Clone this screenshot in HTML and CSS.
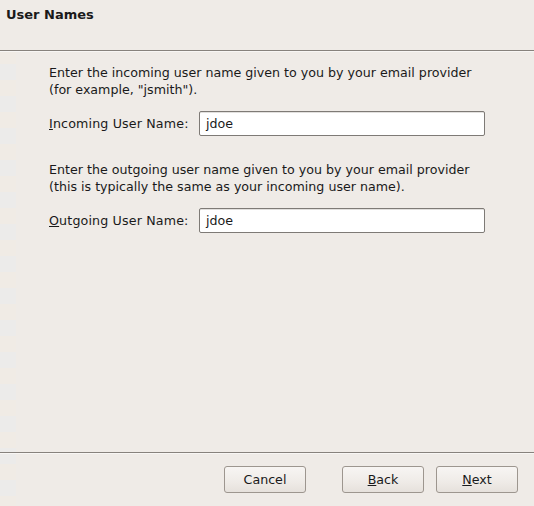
FILE: index.html
```html
<!DOCTYPE html>
<html>
<head>
<meta charset="utf-8">
<link rel="stylesheet" href="styles.css">
</head>
<body>
<div class="window">
  <div class="header">
    <h1 class="title">User Names</h1>
  </div>
  <div class="sep"></div>
  <div class="content">
    <p class="desc">Enter the incoming user name given to you by your email provider<br>(for example, "jsmith").</p>
    <div class="row">
      <label class="label"><u>I</u>ncoming User Name:</label>
      <div class="entry">jdoe</div>
    </div>
    <p class="desc second">Enter the outgoing user name given to you by your email provider<br>(this is typically the same as your incoming user name).</p>
    <div class="row">
      <label class="label"><u>O</u>utgoing User Name:</label>
      <div class="entry">jdoe</div>
    </div>
  </div>
  <div class="sep"></div>
  <div class="buttons">
    <button class="btn">Cancel</button>
    <button class="btn back"><u>B</u>ack</button>
    <button class="btn"><u>N</u>ext</button>
  </div>
</div>
</body>
</html>
```
FILE: styles.css
```css
html, body {
  margin: 0;
  padding: 0;
}
body {
  width: 534px;
  height: 506px;
  background: #efebe7;
  font-family: "DejaVu Sans", sans-serif;
  font-size: 12.65px;
  color: #1a1a1a;
  overflow: hidden;
}
.window {
  display: flex;
  flex-direction: column;
  height: 506px;
  background-image: repeating-linear-gradient(to bottom, #ecebea 0px, #ecebea 16px, #f0ebe5 16px, #f0ebe5 32px);
  background-size: 16px 100%;
  background-repeat: no-repeat;
}
.header {
  height: 50px;
  padding-left: 6px;
  box-sizing: border-box;
  background: #efebe7;
}
.title {
  margin: 0;
  padding-top: 6px;
  font-size: 13px;
  font-weight: bold;
  line-height: 17px;
  color: #1a1a1a;
}
.sep {
  height: 1px;
  background: #87827d;
  border-bottom: 1px solid #f8f6f4;
}
.content {
  flex: 1;
  padding: 12px 0 0 49px;
}
.desc {
  margin: 0;
  line-height: 17px;
}
.desc.second {
  margin-top: 25px;
}
.row {
  display: flex;
  align-items: center;
  margin-top: 13px;
}
.label {
  width: 150px;
  line-height: 17px;
  letter-spacing: 0.15px;
}
.entry {
  box-sizing: border-box;
  width: 286px;
  height: 25px;
  border: 1px solid #7e7a76;
  border-radius: 2px;
  background: #ffffff;
  padding-left: 6px;
  line-height: 23px;
  box-shadow: inset 0 1px 0 #e2e0de;
}
.buttons {
  display: flex;
  justify-content: flex-end;
  gap: 12px;
  padding: 12px 16px 13px 0;
}
.btn {
  width: 82px;
  height: 27px;
  border: 1px solid #9d968f;
  border-radius: 3px;
  background: linear-gradient(to bottom, #f7f5f3 0%, #efebe7 60%, #e6e1dc 100%);
  font-family: "DejaVu Sans", sans-serif;
  font-size: 12.65px;
  color: #1a1a1a;
  padding: 0;
}
.btn.back {
  margin-left: 24px;
}
```
